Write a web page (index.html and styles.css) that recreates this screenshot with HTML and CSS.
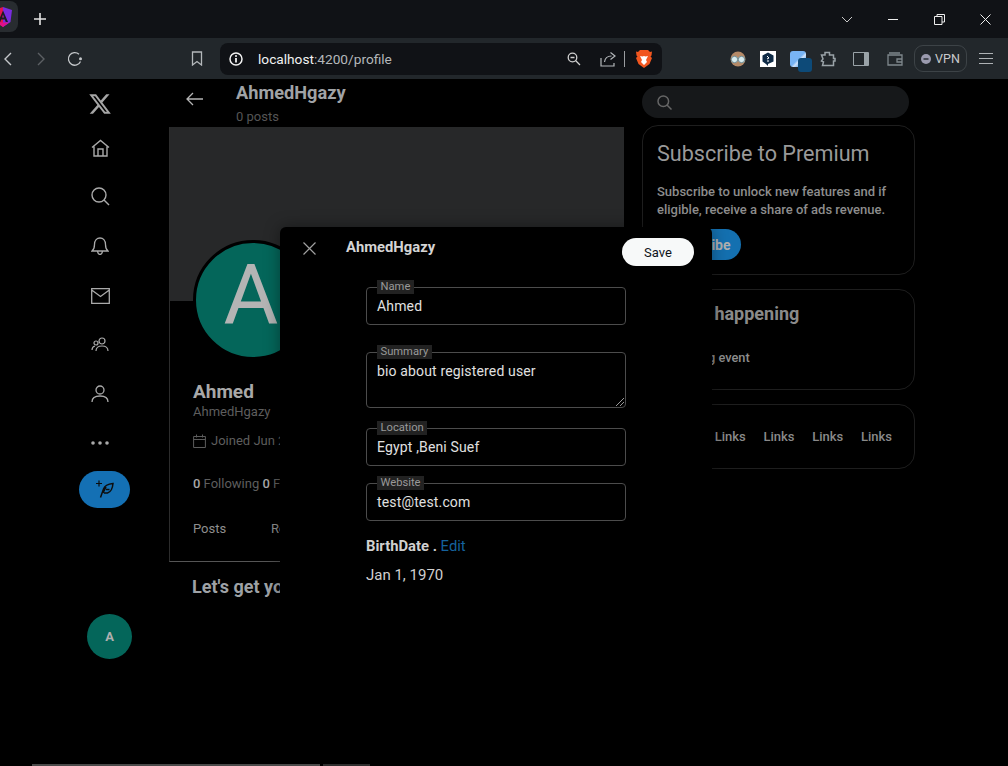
FILE: index.html
```html
<!DOCTYPE html>
<html lang="en">
<head>
<meta charset="UTF-8">
<meta name="viewport" content="width=device-width, initial-scale=1.0">
<title>AhmedHgazy / Profile</title>
<link rel="stylesheet" href="styles.css">
</head>
<body>

<div class="tabstrip">
    <div class="tab">
        <svg width="20" height="22" viewBox="0 0 20 22"><path d="M10 1 1 4l1.500 12L10 21z" fill="#e5124f"/><path d="M10 1l9 3-1.500 12L10 21z" fill="#7a2be0"/><path d="M4 16.500 10 21l6-4.500z" fill="#e0108a"/><path d="M10 4.500 5 16h2.200l1-2.500h3.600l1 2.500H15zM9 11.500l1-3 1 3z" fill="#1b1d21"/></svg>
    </div>
    <svg class="new-tab" width="12" height="12" viewBox="0 0 12 12"><path d="M6 0v12M0 6h12" stroke="#e4e4e4" stroke-width="1.600"/></svg>
    <div class="window-btns">
        <svg class="win-chevron" width="12" height="7" viewBox="0 0 12 7"><path d="M1 1l5 5 5-5" fill="none" stroke="#c8c8c8"/></svg>
        <svg class="win-min" width="11" height="11" viewBox="0 0 11 11"><path d="M0 5.500h10" stroke="#eee"/></svg>
        <svg class="win-max" width="11" height="11" viewBox="0 0 11 11"><path d="M.5 2.500h7.500v8H.5zM3 2.500V.5h7.500V8H8" fill="none" stroke="#eee"/></svg>
        <svg class="win-close" width="11" height="11" viewBox="0 0 11 11"><path d="M.5.500l10 10M10.500.5l-10 10" stroke="#eee"/></svg>
    </div>
</div>

<div class="toolbar">
    <div class="slot first"><svg width="9" height="14" viewBox="0 0 9 14"><path d="M8 1 2 7l6 6" fill="none" stroke="#c4c7ca" stroke-width="1.400"/></svg></div>
    <div class="slot"><svg width="9" height="14" viewBox="0 0 9 14"><path d="M1 1l6 6-6 6" fill="none" stroke="#5c6064" stroke-width="1.400"/></svg></div>
    <div class="slot"><svg width="16" height="16" viewBox="0 0 16 16"><path d="M13.500 10.500A6.300 6.300 0 1 1 12 3.300" fill="none" stroke="#c4c7ca" stroke-width="1.300"/><circle cx="13.500" cy="7.800" r="1.500" fill="#c4c7ca"/></svg></div>
    <div class="slot bookmark"><svg width="12" height="15" viewBox="0 0 12 15"><path d="M1.500 1h9v13L6 10.500 1.500 14z" fill="none" stroke="#b4b8bb" stroke-width="1.300"/></svg></div>
    <div class="urlbar">
        <svg class="url-info" width="14" height="14" viewBox="0 0 14 14"><circle cx="7" cy="7" r="6" fill="none" stroke="#f2f2f2" stroke-width="1.500"/><path d="M7 6v4.500" stroke="#f2f2f2" stroke-width="1.800"/><circle cx="7" cy="4" r="1" fill="#f2f2f2"/></svg>
        <span class="url-text"><span class="url-host">localhost</span>:4200/profile</span>
        <svg class="url-zoom" width="14" height="14" viewBox="0 0 14 14"><circle cx="5.500" cy="5.500" r="4.300" fill="none" stroke="#d0d0d0" stroke-width="1.300"/><path d="M3.500 5.500h4M8.800 8.800 13 13" stroke="#d0d0d0" stroke-width="1.300"/></svg>
        <svg class="url-share" width="16" height="16" viewBox="0 0 16 16"><path d="M1 7v8h13v-3M4.500 11C5 7 8 5 11.500 5M10.500 1.500l4.500 3.500-4.500 3.500" fill="none" stroke="#b4b8bb" stroke-width="1.200"/></svg>
        <span class="url-sep"></span>
        <svg class="url-brave" width="16" height="18" viewBox="0 0 16 18"><path d="M4 0h8l2 2 2-.500-.5 4-1 1L16 8l-2.500 6L8 18l-5.500-4L0 8l1.500-1.500-1-1L0 1.500 2 2z" fill="#f1561f"/><path d="M4 6l2.500.5L8 6l1.500.5L12 6l-2 4 1 2-3 3-3-3 1-2z" fill="#fff"/></svg>
    </div>
    <div class="extensions">
        <div class="ext"><svg width="16" height="16" viewBox="0 0 16 16"><circle cx="8" cy="8" r="7.500" fill="#b58a68"/><circle cx="4.500" cy="8.500" r="3.200" fill="#d8ecef" stroke="#6d8c96"/><circle cx="11.500" cy="8.500" r="3.200" fill="#d8ecef" stroke="#6d8c96"/></svg></div>
        <div class="ext"><svg width="16" height="16" viewBox="0 0 16 16"><path d="M0 0h16v16H0z" fill="#fff"/><path d="M8 1.500 13.500 4.500v6L8 13v2l-2-2-3.500-2.500v-6z" fill="#0f2b46"/><path d="M7 5l2 2-2 1M7 10h2" stroke="#fff" fill="none"/></svg></div>
        <div class="ext ext-blue"><span class="ext-blue-badge"></span></div>
        <div class="ext"><svg width="16" height="16" viewBox="0 0 16 16"><path d="M1.500 4h3.500V1.500h4.500V4h4v3.500h1.500v2.500h-1.500v4.500h-4.500H2.500l1-3.500-2-1 1.500-2z" fill="none" stroke="#9aa3a8" stroke-width="1.500"/></svg></div>
        <div class="ext wide"><svg width="16" height="14" viewBox="0 0 16 14"><path d="M.5.500h15v13H.5z" fill="none" stroke="#9aa3a8"/><path d="M11 1h4v12h-4z" fill="#9aa3a8"/></svg></div>
        <div class="ext wallet"><svg width="16" height="14" viewBox="0 0 16 14"><path d="M2 1h11M15 7v6H1V3h14v4H10v3h5" fill="none" stroke="#7f888d" stroke-width="1.300"/></svg></div>
        <div class="vpn"><svg width="10" height="10" viewBox="0 0 10 10"><circle cx="5" cy="5" r="5" fill="#9a9aae"/><path d="M2.500 5h5" stroke="#22272b" stroke-width="1.400"/></svg>VPN</div>
        <div class="menu"><span></span><span></span><span></span></div>
    </div>
</div>

<div class="page">
    <nav class="sidebar">
        <svg class="logo" width="24" height="24" viewBox="0 0 24 24"><path d="M18.244 2.250h3.308l-7.227 8.260 8.502 11.240H16.170l-5.214-6.817L4.990 21.750H1.680l7.730-8.835L1.254 2.250H8.080l4.713 6.231zm-1.161 17.520h1.833L7.084 4.126H5.117z" fill="#a6a6a6"/></svg>
        <div class="side-item"><svg width="19" height="18" viewBox="0 0 19 18"><path d="M1 8.500l8.500-7 8.500 7M3 7.500v9.500h13V7.500M7 17v-7h5v7" fill="none" stroke="#aaa" stroke-width="1.400"/></svg></div>
        <div class="side-item"><svg width="19" height="19" viewBox="0 0 19 19"><circle cx="8" cy="8" r="7" fill="none" stroke="#aaa" stroke-width="1.400"/><path d="M13 13l5 5" stroke="#aaa" stroke-width="1.400"/></svg></div>
        <div class="side-item"><svg width="18" height="18" viewBox="0 0 18 18"><path d="M1 14c2-1.500 2.500-3 2.500-6.500C3.500 3.500 6 1 9 1s5.500 2.500 5.500 6.500c0 3.500.5 5 2.500 6.500zM6.500 14.500c.5 2 1.500 3 2.500 3s2-1 2.500-3" fill="none" stroke="#aaa" stroke-width="1.300"/></svg></div>
        <div class="side-item"><svg width="19" height="16" viewBox="0 0 19 16"><path d="M.7.700h17.600v14.600H.7zM.7 2l8.800 6.500L18.300 2" fill="none" stroke="#aaa" stroke-width="1.300"/></svg></div>
        <div class="side-item"><svg width="18" height="15" viewBox="0 0 18 15"><circle cx="11" cy="4" r="3" fill="none" stroke="#aaa" stroke-width="1.200"/><circle cx="5" cy="6" r="2" fill="none" stroke="#aaa" stroke-width="1.200"/><path d="M5 14c0-3.500 2.500-5 6-5s6 1.500 6 5M1 13c0-2 1-3.500 3-4" fill="none" stroke="#aaa" stroke-width="1.200"/></svg></div>
        <div class="side-item"><svg width="18" height="18" viewBox="0 0 18 18"><circle cx="9" cy="5" r="4" fill="none" stroke="#aaa" stroke-width="1.300"/><path d="M1 17c0-4 3-6 8-6s8 2 8 6" fill="none" stroke="#aaa" stroke-width="1.300"/></svg></div>
        <div class="side-item"><svg width="18" height="4" viewBox="0 0 18 4"><circle cx="2" cy="2" r="1.800" fill="#aaa"/><circle cx="9" cy="2" r="1.800" fill="#aaa"/><circle cx="16" cy="2" r="1.800" fill="#aaa"/></svg></div>
        <div class="compose"><svg width="18" height="18" viewBox="0 0 18 18"><path d="M0 3.500h6M3 .5v6" stroke="#0d0d0d" stroke-width="1.200"/><path d="M4.500 17.500 7.500 9c1-3 4-5 9.500-5.500-.5 5.500-2 8.500-5.500 9.500H8M10 7 7 13M13.500 9.500H10" fill="none" stroke="#0d0d0d" stroke-width="1.500"/></svg></div>
        <div class="side-avatar">A</div>
    </nav>

    <main class="profile">
        <header class="profile-head">
            <svg class="back" width="17" height="14" viewBox="0 0 17 14"><path d="M7 1 1 7l6 6M1 7h16" fill="none" stroke="#b5b5b5" stroke-width="1.300"/></svg>
            <div>
                <h2 class="head-name">AhmedHgazy</h2>
                <div class="head-posts">0 posts</div>
            </div>
        </header>
        <div class="profile-card">
            <div class="banner"></div>
            <div class="big-avatar">A</div>
            <div class="info">
                <div class="info-name">Ahmed</div>
                <div class="info-handle">AhmedHgazy</div>
                <div class="info-joined">
                    <svg width="13" height="14" viewBox="0 0 13 14"><path d="M.6 2.500h11.800v11H.6zM.6 5.500h11.800M3.500.5v3M9.500.5v3" fill="none" stroke="#5c5c5c"/></svg>
                    Joined Jun 2024
                </div>
                <div class="info-follow"><b>0</b> Following <b>0</b> Followers</div>
                <div class="tabs"><span class="tab-posts">Posts</span><span>Replies</span></div>
            </div>
        </div>
        <h3 class="lets-get">Let's get you set up</h3>
    </main>

    <aside class="right">
        <div class="search">
            <svg width="15" height="15" viewBox="0 0 15 15"><circle cx="6.300" cy="6.300" r="5.300" fill="none" stroke="#666" stroke-width="1.500"/><path d="M10 10l4.500 4.500" stroke="#666" stroke-width="1.500"/></svg>
        </div>
        <section class="card card-premium">
            <h2 class="premium-title">Subscribe to Premium</h2>
            <p class="premium-text">Subscribe to unlock new features and if eligible, receive a share of ads revenue.</p>
            <div class="subscribe">Subscribe</div>
        </section>
        <section class="card card-happening">
            <h3 class="happening-title">What's happening</h3>
            <p class="happening-text">Upcoming event</p>
        </section>
        <section class="card card-links">
            <span>Links</span><span>Links</span><span>Links</span><span>Links</span><span>Links</span>
        </section>
    </aside>

    <div class="dialog">
        <div class="dialog-head">
            <svg class="dialog-close" width="13" height="13" viewBox="0 0 13 13"><path d="M.5.500l12 12M12.500.5l-12 12" stroke="#a0a0a0" stroke-width="1.200"/></svg>
            <div class="dialog-title">AhmedHgazy</div>
            <div class="save">Save</div>
        </div>
        <form class="edit-form">
            <fieldset class="field field-name">
                <legend>Name</legend>
                <div class="field-value">Ahmed</div>
            </fieldset>
            <fieldset class="field field-summary">
                <legend>Summary</legend>
                <div class="field-value">bio about registered user</div>
                <svg class="resize" width="8" height="8" viewBox="0 0 8 8"><path d="M0 8l8-8M4 8l4-4" stroke="#999"/></svg>
            </fieldset>
            <fieldset class="field field-location">
                <legend>Location</legend>
                <div class="field-value">Egypt ,Beni Suef</div>
            </fieldset>
            <fieldset class="field field-website">
                <legend>Website</legend>
                <div class="field-value">test@test.com</div>
            </fieldset>
            <div class="birth"><b>BirthDate .</b> <span class="birth-edit">Edit</span></div>
            <div class="birth-date">Jan 1, 1970</div>
        </form>
    </div>

    <div class="scroll-strip"><span class="strip-a"></span><span class="strip-b"></span></div>
</div>

</body>
</html>
```

FILE: styles.css
```css
html, body {
    margin: 0;
    height: 766px;
    overflow: hidden;
    background-color: #000;
    font-family: Roboto, "Liberation Sans", sans-serif;
}
h2, h3, p {
    margin: 0;
}
svg {
    display: block;
    flex: none;
}

/* browser frame */
.tabstrip {
    height: 38px;
    background-color: #101216;
    display: flex;
    align-items: center;
}
.tab {
    width: 18px;
    height: 31px;
    margin-top: -5px;
    background-color: #282c30;
    border-radius: 0 8px 8px 0;
    display: flex;
    align-items: center;
    justify-content: flex-end;
    overflow: hidden;
}
.tab svg {
    margin-right: 5px;
    margin-left: -10px;
}
.new-tab {
    margin-left: 16px;
}
.window-btns {
    margin-left: auto;
    display: flex;
    align-items: center;
    width: 168px;
}
.win-chevron {
    margin-left: 1px;
}
.win-min {
    margin-left: 35px;
}
.win-max {
    margin-left: 35px;
}
.win-close {
    margin-left: 35px;
}
.toolbar {
    height: 41px;
    background-color: #22272b;
    display: flex;
    align-items: center;
}
.slot {
    width: 34px;
    display: flex;
    justify-content: center;
}
.slot.first {
    margin-left: -10px;
}
.slot.bookmark {
    margin-left: 88px;
    margin-right: 6px;
}
.urlbar {
    width: 442px;
    height: 32px;
    margin-top: 1px;
    background-color: #101216;
    border-radius: 8px;
    display: flex;
    align-items: center;
}
.url-info {
    margin-left: 9px;
}
.url-text {
    margin-left: 15px;
    font-size: 13.7px;
    color: #b4b8bb;
}
.url-host {
    color: #f2f2f2;
}
.url-zoom {
    margin-left: auto;
}
.url-share {
    margin-left: 19px;
}
.url-sep {
    width: 1px;
    height: 16px;
    margin-left: 8px;
    background-color: #9a9da0;
}
.url-brave {
    margin-left: 11px;
    margin-right: 10px;
}
.extensions {
    margin-left: 61px;
    display: flex;
    align-items: center;
}
.ext {
    width: 30px;
    display: flex;
    justify-content: center;
}
.ext.wide {
    width: 36px;
}
.ext.wallet {
    width: 32px;
}
.ext-blue {
    position: relative;
    height: 16px;
}
.ext-blue::before {
    content: "";
    width: 16px;
    height: 16px;
    border-radius: 3px;
    background: linear-gradient(135deg, #78b4f4 50%, #cfe3fb 60%, #78b4f4 75%);
}
.ext-blue-badge {
    position: absolute;
    left: 15px;
    top: 7px;
    width: 14px;
    height: 14px;
    border-radius: 3px;
    background-color: #0d4a78;
}
.vpn {
    width: 53px;
    height: 27px;
    margin-left: 3px;
    box-sizing: border-box;
    border: 1px solid #3d4347;
    border-radius: 9px;
    display: flex;
    align-items: center;
    justify-content: center;
    gap: 4px;
    font-size: 12.5px;
    color: #c8cacc;
}
.menu {
    width: 38px;
    display: flex;
    flex-direction: column;
    align-items: center;
    gap: 4px;
}
.menu span {
    width: 14px;
    height: 1px;
    background-color: #aeb2b5;
}

/* page */
.page {
    position: relative;
    height: 687px;
    display: flex;
    background-color: #000;
}
.sidebar {
    width: 169px;
    flex: none;
    display: flex;
    flex-direction: column;
    align-items: flex-start;
    padding-top: 13px;
    box-sizing: border-box;
}
.logo {
    margin-left: 88px;
    margin-bottom: 7px;
}
.side-item {
    width: 24px;
    height: 49.3px;
    margin-left: 88px;
    display: flex;
    align-items: center;
    justify-content: center;
}
.compose {
    width: 51px;
    height: 37px;
    margin-left: 79px;
    margin-top: 3px;
    border-radius: 19px;
    background-color: #1470b4;
    display: flex;
    align-items: center;
    justify-content: center;
}
.compose svg {
    margin-top: -2px;
}
.side-avatar {
    width: 45px;
    height: 45px;
    margin-left: 87px;
    margin-top: 106px;
    border-radius: 50%;
    background-color: #04665a;
    color: #b0b0b0;
    font-size: 13px;
    font-weight: 700;
    display: flex;
    align-items: center;
    justify-content: center;
}
.profile {
    width: 455px;
    flex: none;
}
.profile-head {
    height: 48px;
    display: flex;
    align-items: center;
    box-sizing: border-box;
}
.back {
    margin-left: 17px;
    margin-right: 33px;
    margin-top: -8px;
}
.head-name {
    font-size: 18.2px;
    line-height: 26px;
    font-weight: 700;
    color: #a0a3a6;
    margin-top: 2px;
}
.head-posts {
    font-size: 13px;
    line-height: 22px;
    color: #555;
}
.profile-card {
    position: relative;
    height: 435px;
    border-left: 1px solid #2c2c2c;
    border-bottom: 1px solid #555;
    box-sizing: border-box;
}
.banner {
    height: 174px;
    background-color: #272829;
}
.big-avatar {
    position: absolute;
    left: 23px;
    top: 113px;
    width: 110px;
    height: 104px;
    padding-right: 4px;
    padding-bottom: 10px;
    border: 3px solid #000;
    border-radius: 50%;
    background-color: #04665a;
    color: #b4b4b4;
    font-size: 84px;
    display: flex;
    align-items: center;
    justify-content: center;
}
.info {
    padding: 80px 0 0 23px;
}
.info-name {
    font-size: 19px;
    line-height: 22px;
    font-weight: 700;
    color: #a8a8a8;
}
.info-handle {
    font-size: 13px;
    line-height: 18px;
    margin-top: 0;
    color: #5e5e5e;
}
.info-joined {
    margin-top: 11px;
    font-size: 13px;
    line-height: 18px;
    color: #5e5e5e;
    display: flex;
    align-items: center;
    gap: 5px;
}
.info-follow {
    margin-top: 25px;
    font-size: 13px;
    line-height: 18px;
    color: #5e5e5e;
}
.info-follow b {
    font-weight: 500;
    color: #a8a8a8;
}
.tabs {
    margin-top: 27px;
    font-size: 13px;
    line-height: 18px;
    color: #8f8f8f;
    display: flex;
}
.tab-posts {
    width: 78px;
}
.lets-get {
    margin-top: 14px;
    margin-left: 23px;
    font-size: 18px;
    line-height: 22px;
    font-weight: 700;
    color: #9ea2a6;
}
.right {
    width: 273px;
    margin-left: 18px;
    flex: none;
    padding-top: 7px;
    box-sizing: border-box;
}
.search {
    width: 267px;
    height: 32px;
    border-radius: 16px;
    background-color: #16181a;
    display: flex;
    align-items: center;
    padding-left: 15px;
    box-sizing: border-box;
}
.card {
    border: 1px solid #1e1e1e;
    border-radius: 16px;
    box-sizing: border-box;
    padding: 0 14px;
}
.card-premium {
    height: 150px;
    margin-top: 7px;
    padding-top: 13px;
}
.premium-title {
    font-size: 21.6px;
    line-height: 30px;
    font-weight: 400;
    color: #999;
}
.premium-text {
    margin-top: 14px;
    font-size: 13px;
    line-height: 18px;
    font-weight: 500;
    color: #8d8d8d;
}
.subscribe {
    width: 84px;
    height: 31px;
    margin-top: 10px;
    border-radius: 16px;
    background-color: #1470b0;
    color: #b0b0b0;
    font-size: 14px;
    font-weight: 700;
    display: flex;
    align-items: center;
    justify-content: center;
}
.card-happening {
    height: 101px;
    margin-top: 14px;
    padding-top: 13px;
}
.happening-title {
    font-size: 18px;
    line-height: 22px;
    font-weight: 700;
    color: #8a8a8a;
}
.happening-text {
    margin-top: 24px;
    font-size: 12.8px;
    line-height: 18px;
    font-weight: 500;
    color: #8d8d8d;
}
.card-links {
    height: 65px;
    margin-top: 14px;
    display: flex;
    align-items: center;
    justify-content: flex-end;
    gap: 17.7px;
    padding-right: 22px;
    font-size: 13px;
    font-weight: 500;
    color: #8a8a8a;
}

/* edit dialog, sits over the page */
.dialog {
    position: absolute;
    left: 280px;
    top: 148px;
    bottom: 0;
    width: 432px;
    background-color: #000;
    border-radius: 6px 6px 0 0;
    box-shadow: 0 0 16px rgba(0, 0, 0, 0.4);
    color: #dcdcdc;
}
.dialog-head {
    position: relative;
    height: 40px;
}
.dialog-close {
    position: absolute;
    left: 23px;
    top: 15px;
}
.dialog-title {
    position: absolute;
    left: 66px;
    top: 11px;
    font-size: 14.8px;
    line-height: 18px;
    font-weight: 700;
    color: #d4d4d4;
}
.save {
    position: absolute;
    left: 342px;
    top: 11px;
    width: 72px;
    height: 28px;
    border-radius: 14px;
    background-color: #f7f9f9;
    color: #0f1419;
    font-size: 13px;
    display: flex;
    align-items: center;
    justify-content: center;
}
.edit-form {
    width: 260px;
    margin-left: 86px;
    padding-top: 13px;
}
.field {
    position: relative;
    margin: 0;
    padding: 2px 10px 0;
    border: 1px solid #4c4c4c;
    border-radius: 4px;
    min-width: 0;
    box-sizing: border-box;
}
.field legend {
    padding: 0 3.5px;
    margin-left: 0;
    font-size: 11.2px;
    line-height: 14px;
    background-color: #222;
    color: #999;
}
.field-value {
    font-size: 14px;
    line-height: 20px;
    letter-spacing: 0.15px;
    color: #e0e0e0;
}
.field-name,
.field-location,
.field-website {
    height: 45px;
}
.field-summary {
    height: 63px;
    margin-top: 20px;
}
.field-location {
    margin-top: 13px;
}
.field-website {
    margin-top: 10px;
}
.resize {
    position: absolute;
    right: 1px;
    bottom: 1px;
}
.birth {
    margin-top: 16px;
    font-size: 14.8px;
    line-height: 18px;
    color: #d0d0d0;
}
.birth-edit {
    color: #15629c;
}
.birth-date {
    margin-top: 11px;
    font-size: 15px;
    line-height: 18px;
    color: #d0d0d0;
}
.scroll-strip {
    position: absolute;
    left: 32px;
    bottom: 0;
    height: 2px;
    display: flex;
    gap: 3px;
}
.strip-a {
    width: 288px;
    background-color: #4a4a4a;
}
.strip-b {
    width: 47px;
    background-color: #2e2e2e;
}
```
